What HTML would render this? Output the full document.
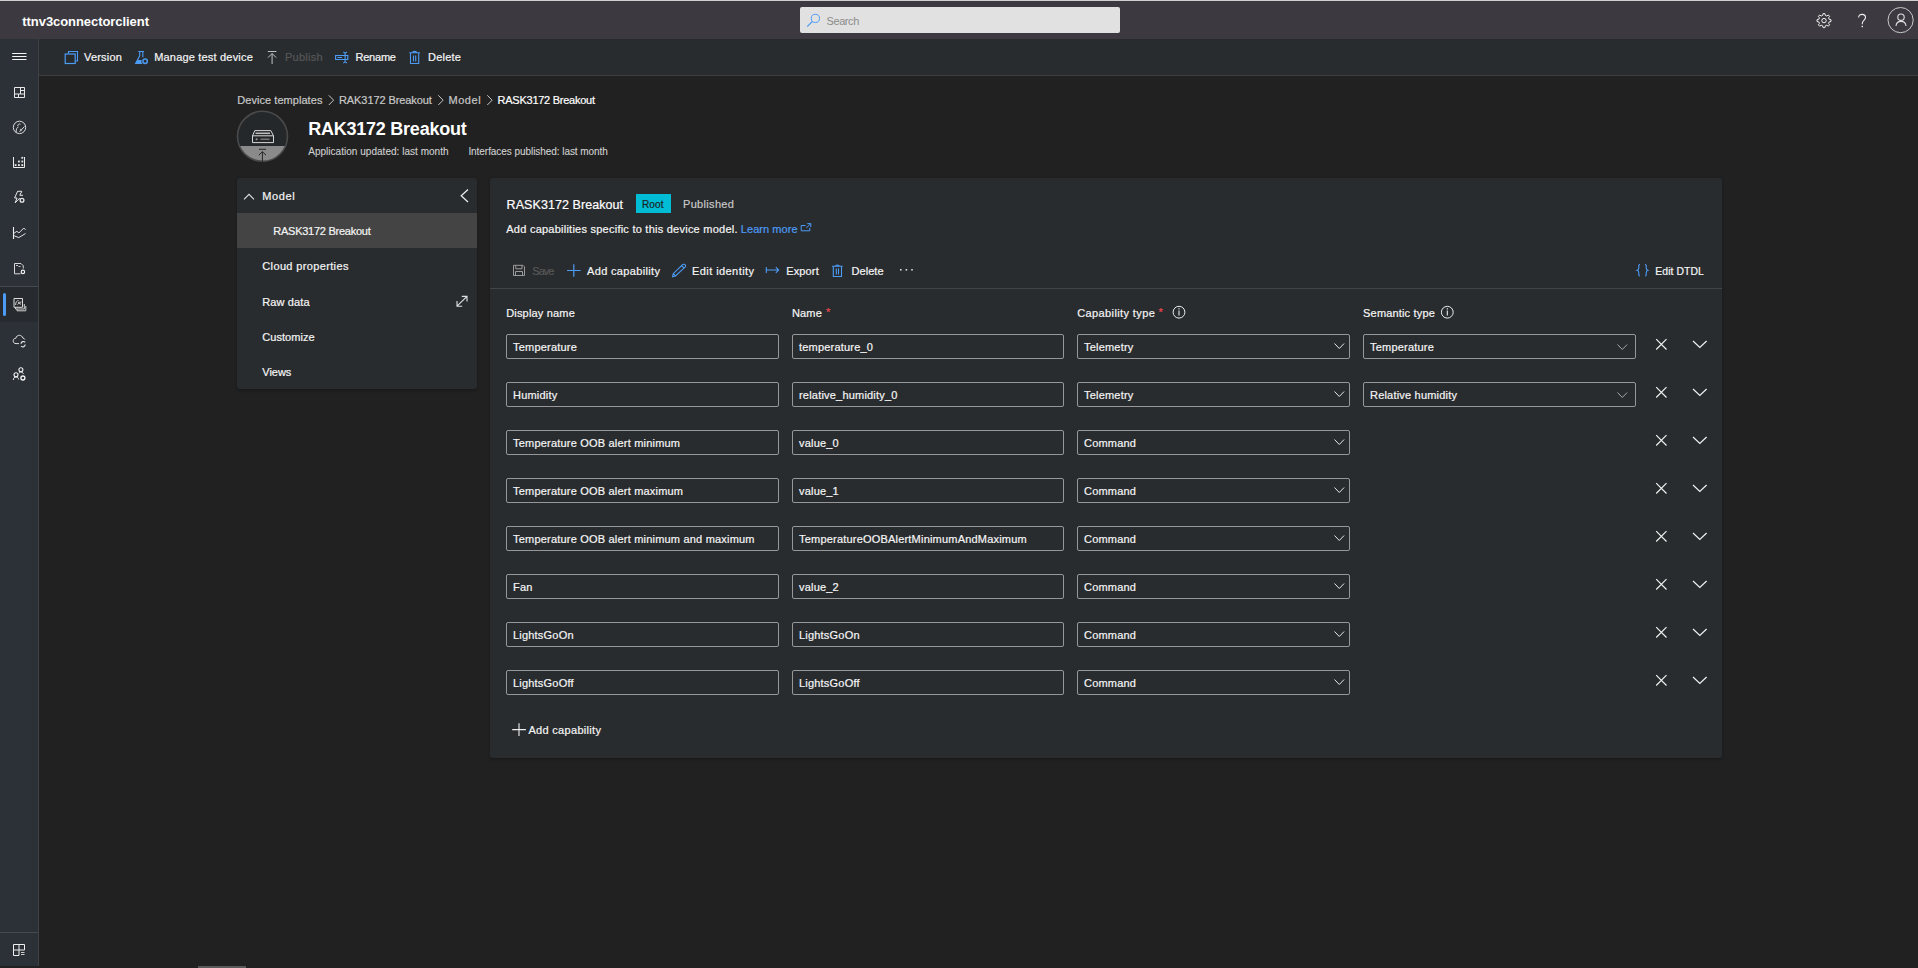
<!DOCTYPE html>
<html><head><meta charset="utf-8">
<style>
*{box-sizing:border-box;margin:0;padding:0}
html,body{width:1918px;height:968px;overflow:hidden}
body{background:#212121;font-family:"Liberation Sans",sans-serif;color:#f5f5f5;font-size:11px;position:relative}
.abs{position:absolute}
.t{position:absolute;white-space:nowrap;line-height:1;-webkit-text-stroke:0.2px currentColor}
.panel{background:#292c2f;border-radius:3px;box-shadow:0 1.6px 3.6px rgba(0,0,0,.13),0 .3px .9px rgba(0,0,0,.11)}
.inp{position:absolute;height:25px;border:1px solid #979797;border-radius:2px;background:#292c2f}
svg{position:absolute;overflow:visible}

</style></head><body>
<div class="abs" style="left:0;top:0;width:1918px;height:1px;background:#cfcfcf"></div>
<div class="abs" style="left:0;top:1px;width:1918px;height:38px;background:#3c3a40"></div>
<div class="abs" style="left:800px;top:7px;width:320px;height:26px;background:#e1e1e1;border-radius:2px"></div>
<div class="abs" style="left:0;top:39px;width:38px;height:927px;background:#2c3138"></div>
<div class="abs" style="left:38px;top:39px;width:1px;height:927px;background:#3e4146"></div>
<div class="abs" style="left:39px;top:39px;width:1879px;height:36px;background:#292c2f"></div>
<div class="abs" style="left:39px;top:75px;width:1879px;height:1px;background:#3d3d3d"></div>
<div class="abs panel" style="left:237px;top:178px;width:240px;height:211px"></div>
<div class="abs" style="left:237px;top:213px;width:240px;height:35px;background:#444444"></div>
<div class="abs panel" style="left:490px;top:178px;width:1232px;height:580px"></div>
<div class="abs" style="left:636px;top:194px;width:35px;height:19px;background:#00bcd4"></div>
<div class="abs" style="left:490px;top:288px;width:1232px;height:1px;background:#424548"></div>
<div class="abs" style="left:0;top:286px;width:38px;height:1px;background:#464a50"></div>
<div class="abs" style="left:0;top:287px;width:38px;height:35px;background:#272a2e"></div>
<div class="abs" style="left:3px;top:293px;width:3px;height:23px;background:#4c9bf5;border-radius:2px"></div>
<div class="abs" style="left:0;top:932px;width:38px;height:1px;background:#464a50"></div>
<div class="abs" style="left:198px;top:966px;width:48px;height:2px;background:#5a5a5a"></div>

<div class="inp" style="left:506px;top:334px;width:273px"></div>
<div class="inp" style="left:792px;top:334px;width:272px"></div>
<div class="inp" style="left:1077px;top:334px;width:273px"></div>
<svg style="left:1333.5px;top:342.6px" width="11" height="7"><path d="M0.5 0.5 L5.3 5.5 L10.1 0.5" fill="none" stroke="#e8e8e8" stroke-width="1"/></svg>
<div class="inp" style="left:1363px;top:334px;width:273px"></div>
<svg style="left:1616.7px;top:343.6px" width="11" height="7"><path d="M0.5 0.5 L5.3 5.5 L10.1 0.5" fill="none" stroke="#a8a8a8" stroke-width="1"/></svg>
<svg style="left:1655px;top:338px" width="13" height="13"><path d="M1.2 1.2 L11.5 11.5 M11.5 1.2 L1.2 11.5" fill="none" stroke="#f0f0f0" stroke-width="1.2"/></svg>
<svg style="left:1692px;top:340px" width="16" height="9"><path d="M1 1 L7.8 7.5 L14.6 1" fill="none" stroke="#f0f0f0" stroke-width="1.2"/></svg>
<div class="inp" style="left:506px;top:382px;width:273px"></div>
<div class="inp" style="left:792px;top:382px;width:272px"></div>
<div class="inp" style="left:1077px;top:382px;width:273px"></div>
<svg style="left:1333.5px;top:390.6px" width="11" height="7"><path d="M0.5 0.5 L5.3 5.5 L10.1 0.5" fill="none" stroke="#e8e8e8" stroke-width="1"/></svg>
<div class="inp" style="left:1363px;top:382px;width:273px"></div>
<svg style="left:1616.7px;top:391.6px" width="11" height="7"><path d="M0.5 0.5 L5.3 5.5 L10.1 0.5" fill="none" stroke="#a8a8a8" stroke-width="1"/></svg>
<svg style="left:1655px;top:386px" width="13" height="13"><path d="M1.2 1.2 L11.5 11.5 M11.5 1.2 L1.2 11.5" fill="none" stroke="#f0f0f0" stroke-width="1.2"/></svg>
<svg style="left:1692px;top:388px" width="16" height="9"><path d="M1 1 L7.8 7.5 L14.6 1" fill="none" stroke="#f0f0f0" stroke-width="1.2"/></svg>
<div class="inp" style="left:506px;top:430px;width:273px"></div>
<div class="inp" style="left:792px;top:430px;width:272px"></div>
<div class="inp" style="left:1077px;top:430px;width:273px"></div>
<svg style="left:1333.5px;top:438.6px" width="11" height="7"><path d="M0.5 0.5 L5.3 5.5 L10.1 0.5" fill="none" stroke="#e8e8e8" stroke-width="1"/></svg>
<svg style="left:1655px;top:434px" width="13" height="13"><path d="M1.2 1.2 L11.5 11.5 M11.5 1.2 L1.2 11.5" fill="none" stroke="#f0f0f0" stroke-width="1.2"/></svg>
<svg style="left:1692px;top:436px" width="16" height="9"><path d="M1 1 L7.8 7.5 L14.6 1" fill="none" stroke="#f0f0f0" stroke-width="1.2"/></svg>
<div class="inp" style="left:506px;top:478px;width:273px"></div>
<div class="inp" style="left:792px;top:478px;width:272px"></div>
<div class="inp" style="left:1077px;top:478px;width:273px"></div>
<svg style="left:1333.5px;top:486.6px" width="11" height="7"><path d="M0.5 0.5 L5.3 5.5 L10.1 0.5" fill="none" stroke="#e8e8e8" stroke-width="1"/></svg>
<svg style="left:1655px;top:482px" width="13" height="13"><path d="M1.2 1.2 L11.5 11.5 M11.5 1.2 L1.2 11.5" fill="none" stroke="#f0f0f0" stroke-width="1.2"/></svg>
<svg style="left:1692px;top:484px" width="16" height="9"><path d="M1 1 L7.8 7.5 L14.6 1" fill="none" stroke="#f0f0f0" stroke-width="1.2"/></svg>
<div class="inp" style="left:506px;top:526px;width:273px"></div>
<div class="inp" style="left:792px;top:526px;width:272px"></div>
<div class="inp" style="left:1077px;top:526px;width:273px"></div>
<svg style="left:1333.5px;top:534.6px" width="11" height="7"><path d="M0.5 0.5 L5.3 5.5 L10.1 0.5" fill="none" stroke="#e8e8e8" stroke-width="1"/></svg>
<svg style="left:1655px;top:530px" width="13" height="13"><path d="M1.2 1.2 L11.5 11.5 M11.5 1.2 L1.2 11.5" fill="none" stroke="#f0f0f0" stroke-width="1.2"/></svg>
<svg style="left:1692px;top:532px" width="16" height="9"><path d="M1 1 L7.8 7.5 L14.6 1" fill="none" stroke="#f0f0f0" stroke-width="1.2"/></svg>
<div class="inp" style="left:506px;top:574px;width:273px"></div>
<div class="inp" style="left:792px;top:574px;width:272px"></div>
<div class="inp" style="left:1077px;top:574px;width:273px"></div>
<svg style="left:1333.5px;top:582.6px" width="11" height="7"><path d="M0.5 0.5 L5.3 5.5 L10.1 0.5" fill="none" stroke="#e8e8e8" stroke-width="1"/></svg>
<svg style="left:1655px;top:578px" width="13" height="13"><path d="M1.2 1.2 L11.5 11.5 M11.5 1.2 L1.2 11.5" fill="none" stroke="#f0f0f0" stroke-width="1.2"/></svg>
<svg style="left:1692px;top:580px" width="16" height="9"><path d="M1 1 L7.8 7.5 L14.6 1" fill="none" stroke="#f0f0f0" stroke-width="1.2"/></svg>
<div class="inp" style="left:506px;top:622px;width:273px"></div>
<div class="inp" style="left:792px;top:622px;width:272px"></div>
<div class="inp" style="left:1077px;top:622px;width:273px"></div>
<svg style="left:1333.5px;top:630.6px" width="11" height="7"><path d="M0.5 0.5 L5.3 5.5 L10.1 0.5" fill="none" stroke="#e8e8e8" stroke-width="1"/></svg>
<svg style="left:1655px;top:626px" width="13" height="13"><path d="M1.2 1.2 L11.5 11.5 M11.5 1.2 L1.2 11.5" fill="none" stroke="#f0f0f0" stroke-width="1.2"/></svg>
<svg style="left:1692px;top:628px" width="16" height="9"><path d="M1 1 L7.8 7.5 L14.6 1" fill="none" stroke="#f0f0f0" stroke-width="1.2"/></svg>
<div class="inp" style="left:506px;top:670px;width:273px"></div>
<div class="inp" style="left:792px;top:670px;width:272px"></div>
<div class="inp" style="left:1077px;top:670px;width:273px"></div>
<svg style="left:1333.5px;top:678.6px" width="11" height="7"><path d="M0.5 0.5 L5.3 5.5 L10.1 0.5" fill="none" stroke="#e8e8e8" stroke-width="1"/></svg>
<svg style="left:1655px;top:674px" width="13" height="13"><path d="M1.2 1.2 L11.5 11.5 M11.5 1.2 L1.2 11.5" fill="none" stroke="#f0f0f0" stroke-width="1.2"/></svg>
<svg style="left:1692px;top:676px" width="16" height="9"><path d="M1 1 L7.8 7.5 L14.6 1" fill="none" stroke="#f0f0f0" stroke-width="1.2"/></svg>
<svg style="left:0;top:0" width="1918" height="968" viewBox="0 0 1918 968">
<g fill="none" stroke-linecap="butt">
<!-- search -->
<circle cx="815.4" cy="18.4" r="4.1" stroke="#4c9bf5" stroke-width="1"/>
<path d="M812.3 21.5 L807.2 26.6" stroke="#4c9bf5" stroke-width="1.1"/>
<!-- gear -->
<path d="M1823.1 13.6 L1824.9 13.6 L1825.3 15.4 L1826.8 16.0 L1828.3 15.0 L1829.6 16.3 L1828.6 17.8 L1829.2 19.3 L1831.0 19.7 L1831.0 21.5 L1829.2 21.9 L1828.6 23.4 L1829.6 24.9 L1828.3 26.2 L1826.8 25.2 L1825.3 25.8 L1824.9 27.6 L1823.1 27.6 L1822.7 25.8 L1821.2 25.2 L1819.7 26.2 L1818.4 24.9 L1819.4 23.4 L1818.8 21.9 L1817.0 21.5 L1817.0 19.7 L1818.8 19.3 L1819.4 17.8 L1818.4 16.3 L1819.7 15.0 L1821.2 16.0 L1822.7 15.4 Z" stroke="#f0f0f0" stroke-width="1"/>
<circle cx="1824" cy="20.6" r="2.2" stroke="#f0f0f0" stroke-width="1"/>
<!-- question -->
<path d="M1858.6 17.6 C1858.6 15.3 1860.1 14.4 1862 14.4 C1864 14.4 1865.5 15.6 1865.5 17.5 C1865.5 20 1862.3 20.6 1862.3 23.2 L1862.3 24.3" stroke="#f0f0f0" stroke-width="1.1"/>
<rect x="1861.6" y="25.8" width="1.4" height="1.4" fill="#f0f0f0" stroke="none"/>
<!-- avatar -->
<circle cx="1900.6" cy="20.1" r="12.6" stroke="#c8c8c8" stroke-width="1"/>
<circle cx="1901" cy="17.2" r="3.2" stroke="#e0e0e0" stroke-width="1.1"/>
<path d="M1896 26 C1896.3 23 1898.2 21.4 1901 21.4 C1903.8 21.4 1905.7 23 1906 26" stroke="#e0e0e0" stroke-width="1.1"/>

<!-- nav: hamburger -->
<path d="M12.2 53.5 H26.5 M12.2 56.5 H26.5 M12.2 59.5 H26.5" stroke="#f5f5f5" stroke-width="1"/>
<!-- dashboard -->
<path d="M14.5 87.5 H24.5 V97.5 H14.5 Z M20.5 87.5 V94 M20.5 90.5 H24.5 M14.5 94 H24.5 M18.5 94 V97.5" stroke="#e8e8e8" stroke-width="1"/>
<!-- circle person -->
<circle cx="19.5" cy="127.4" r="6.2" stroke="#dcdcdc" stroke-width="1"/>
<path d="M16.2 132.5 C16 129 16.8 127.5 18.5 127 M17.8 126.2 C17.5 124.5 19 123.5 20.5 124.2 M19.5 131.8 L24.5 126.5" stroke="#dcdcdc" stroke-width="1"/>
<circle cx="21" cy="129.8" r="1.1" fill="#bbb" stroke="none"/>
<!-- bar chart -->
<path d="M13.5 157 V167.5 H24.5 V157" stroke="#ececec" stroke-width="1"/>
<g fill="#ececec" stroke="none"><rect x="14.7" y="164.2" width="1.8" height="1.8"/><rect x="18" y="164.2" width="1.8" height="1.8"/><rect x="21.4" y="164.2" width="1.8" height="1.8"/><rect x="18" y="160.6" width="1.8" height="1.8"/><rect x="21.4" y="160.6" width="1.8" height="1.8"/><rect x="21.4" y="156.9" width="1.8" height="1.8"/></g>
<!-- flash -->
<path d="M17.6 191.3 H21.8 L19.8 195.3 H23 M17.6 191.3 L14.6 198 H17 L15.2 202.8 L19.8 198" stroke="#e8e8e8" stroke-width="1"/>
<circle cx="22" cy="200.2" r="1.9" stroke="#e8e8e8" stroke-width="1.3"/>
<!-- chart -->
<path d="M13.5 227 V239" stroke="#f0f0f0" stroke-width="1.1"/>
<path d="M13.5 233.5 L16.9 231.3 L18.9 233 L23.8 228 L25.5 229.8 M13.5 235.5 L18.8 237.6 L25.5 233.5" stroke="#e0e0e0" stroke-width="1"/>
<!-- file -->
<path d="M14.5 273.8 V263.5 H21 L23.3 265.8 V268.5 M14.5 273.8 H20.5" stroke="#d8d8d8" stroke-width="1"/>
<path d="M16 265.5 H18 M18.5 266.5 H20.5" stroke="#c8c8c8" stroke-width="1"/>
<circle cx="22.9" cy="271.9" r="1.7" stroke="#f0f0f0" stroke-width="1.2"/>
<!-- selected (device templates) -->
<path d="M14 298.5 H22.5 V307.3 H14 Z" stroke="#dcdcdc" stroke-width="1"/>
<path d="M15.5 307.3 V309 H24.3 V304 M17 309 V310.8 H25.8 V306" stroke="#d0d0d0" stroke-width="1"/>
<path d="M15.6 305 C15.6 302 17 300.5 18.5 300.5 M18 302.5 L21.5 302 M17.5 304.5 C18 303.2 20 303 21 304.5" stroke="#cccccc" stroke-width="1"/>
<!-- cloud -->
<path d="M19 343.6 H16 C14 343.6 13.2 342.2 13.2 340.8 C13.2 339.3 14.3 338.2 15.8 338.3 C16.3 336.2 17.8 335.3 19.4 335.3 C21.2 335.3 22.4 336.5 22.8 338 C23.8 338.1 24.6 338.8 24.8 339.5" stroke="#e0e0e0" stroke-width="1"/>
<path d="M21 343.8 A2.4 2.4 0 0 1 25.2 342.3 M25.2 344.5 A2.4 2.4 0 0 1 21 346" stroke="#e8e8e8" stroke-width="1.1"/>
<!-- people -->
<circle cx="20.9" cy="369.8" r="2" stroke="#f0f0f0" stroke-width="1.1"/>
<circle cx="16" cy="374.8" r="2" stroke="#f0f0f0" stroke-width="1.1"/>
<path d="M13.3 380 C13.5 377.8 14.6 377 16 377 C17.4 377 18.5 377.8 18.7 379.5 M19 373.3 C19.5 372.2 20.2 372 20.9 372 C22 372 23 372.7 23.4 374" stroke="#eaeaea" stroke-width="1"/>
<circle cx="22.9" cy="378" r="2" stroke="#f5f5f5" stroke-width="1.3"/>
<!-- bottom nav icon -->
<path d="M13.5 944.5 H19.5 M13.5 944.5 V955.5 H19 M13.5 950 H24.5 M19 944.5 V955.5 M19 944.5 H24.5 V950" stroke="#eeeeee" stroke-width="1"/>
<path d="M21 952.5 H24.5 M21 954.5 H24.5" stroke="#cccccc" stroke-width="1"/>

<!-- command bar -->
<path d="M68.5 53.5 V51.5 H77.5 V61 H75.5" stroke="#4c9bf5" stroke-width="1.1"/>
<rect x="65.2" y="54" width="10" height="9.5" stroke="#4c9bf5" stroke-width="1.2"/>
<path d="M138.2 51.5 H144 M139.7 51.5 V55.8 L135.6 63.5 H142 M142.8 51.5 V57.2" stroke="#4c9bf5" stroke-width="1.1"/>
<path d="M137.4 60 H141.5 V63.6 H135.6 Z" fill="#4c9bf5" stroke="none"/>
<circle cx="145.1" cy="61.2" r="2.2" stroke="#4c9bf5" stroke-width="1.5"/>
<path d="M267.8 51.5 H276.4 M272.1 53.5 V64 M268 57.6 L272.1 53.5 L276.2 57.6" stroke="#c0c0c0" stroke-width="1"/>
<path d="M335.6 55.5 H347.8 V59.5 H335.6 Z M337.5 57.5 H342" stroke="#4c9bf5" stroke-width="1.1"/>
<path d="M345.1 52.5 V62.5 M343.3 52 L345.1 53.2 L346.9 52 M343.3 63 L345.1 61.8 L346.9 63" stroke="#4c9bf5" stroke-width="1.1"/>
<path d="M409.3 52.8 H420 M412.6 52.5 C412.6 51 416.6 51 416.6 52.5 M410.5 53 V63.5 H418.7 V53 M413.5 55.5 V61.5 M415.7 55.5 V61.5" stroke="#4c9bf5" stroke-width="1.1"/>

<!-- breadcrumb chevrons -->
<path d="M328.8 95.3 L333.6 100.2 L328.8 105" stroke="#c8c8c8" stroke-width="1"/>
<path d="M438.3 95.3 L443.1 100.2 L438.3 105" stroke="#c8c8c8" stroke-width="1"/>
<path d="M487.3 95.3 L492.1 100.2 L487.3 105" stroke="#c8c8c8" stroke-width="1"/>

<!-- left panel -->
<path d="M244 199.3 L249 194.3 L254 199.3" stroke="#e0e0e0" stroke-width="1.1"/>
<path d="M468 189.5 L461.2 195.8 L468 202" stroke="#f0f0f0" stroke-width="1.2"/>
<path d="M457 306.2 L467 296.4 M461.8 296.4 H467 V301.6 M457 301 V306.2 H462.2" stroke="#e0e0e0" stroke-width="1.1"/>

<!-- panel toolbar -->
<path d="M513.5 265.3 H523 L524.5 266.8 V275.5 H513.5 Z M515.8 265.3 V268.8 H522 V265.3 M515.5 275.5 V271.5 H522.5 V275.5" stroke="#9a9a9a" stroke-width="1"/>
<path d="M567 270.5 H580.6 M573.8 264.3 V276.8" stroke="#4c9bf5" stroke-width="1.2"/>
<path d="M682.8 264.5 C683.8 263.8 685 264.4 685.4 265.1 C685.8 265.8 685.6 266.7 685 267.2 L675.5 276 L672.5 276.7 L673.2 273.7 Z M681.6 265.7 L684.2 268.2 M673.3 273.6 L675.6 275.9" stroke="#4c9bf5" stroke-width="1.1"/>
<path d="M766.3 267 V273 M766.3 270 H778.5 M775.8 267.2 L778.7 270 L775.8 272.8" stroke="#4c9bf5" stroke-width="1.1"/>
<path d="M832.1 266.3 H842.7 M835.5 266 C835.5 264.6 839.3 264.6 839.3 266 M833.3 266.5 V276.5 H841.5 V266.5 M836.3 268.5 V274.5 M838.5 268.5 V274.5" stroke="#4c9bf5" stroke-width="1.1"/>
<g fill="#d8d8d8" stroke="none"><rect x="900" y="269" width="1.6" height="1.6"/><rect x="905.6" y="269" width="1.6" height="1.6"/><rect x="911.2" y="269" width="1.6" height="1.6"/></g>
<path d="M1640 264.5 C1638.5 264.5 1638.8 266 1638.8 267.8 C1638.8 269.2 1638.3 270 1637.2 270.3 C1638.3 270.6 1638.8 271.4 1638.8 272.8 C1638.8 274.6 1638.5 276 1640 276 M1645 264.5 C1646.5 264.5 1646.2 266 1646.2 267.8 C1646.2 269.2 1646.7 270 1647.8 270.3 C1646.7 270.6 1646.2 271.4 1646.2 272.8 C1646.2 274.6 1646.5 276 1645 276" stroke="#4c9bf5" stroke-width="1.1"/>

<!-- learn more ext -->
<path d="M805.5 225.5 H801.2 V230.8 H809.8 V227.8 M807.3 223.6 H810.8 V227 M810.8 223.6 L806.3 227.8" stroke="#4c9bf5" stroke-width="1"/>

<!-- info icons -->
<circle cx="1179" cy="312.2" r="5.9" stroke="#ececec" stroke-width="1"/>
<path d="M1179 310.5 V315.5" stroke="#ececec" stroke-width="1.1"/>
<rect x="1178.4" y="308.2" width="1.2" height="1.2" fill="#ececec" stroke="none"/>
<circle cx="1447.3" cy="312.2" r="5.9" stroke="#ececec" stroke-width="1"/>
<path d="M1447.3 310.5 V315.5" stroke="#ececec" stroke-width="1.1"/>
<rect x="1446.7" y="308.2" width="1.2" height="1.2" fill="#ececec" stroke="none"/>

<!-- add capability plus -->
<path d="M512.2 729.6 H525.9 M519 723.2 V736" stroke="#f0f0f0" stroke-width="1.1"/>
</g>
</svg>
<!-- avatar -->
<svg style="left:236px;top:110px" width="53" height="53"><defs><clipPath id="cc"><circle cx="26.5" cy="26.3" r="25"/></clipPath></defs><circle cx="26.5" cy="26.3" r="25" fill="#25282b"/><rect x="0" y="36" width="53" height="20" fill="#8a8a8a" clip-path="url(#cc)"/><circle cx="26.5" cy="26.3" r="25" fill="none" stroke="#4a4a4a" stroke-width="1.6"/><path d="M16.5 25.8 L18.8 20.6 H34.8 L37.5 25.8 V32.6 H16.5 Z M16.5 25.8 H37.5" fill="none" stroke="#d8d8d8" stroke-width="1"/><path d="M19.5 23.3 H34" stroke="#c0c0c0" stroke-width="1.5"/><circle cx="20.6" cy="29.2" r="1" fill="#9a9a9a"/><path d="M24.5 29.2 H33.5" stroke="#8a8a8a" stroke-width="1.2"/><path d="M23 39.3 H30 M26.4 41.8 V52 M22.8 45.2 L26.4 41.7 L30 45.2" fill="none" stroke="#262626" stroke-width="1"/></svg>

<div class="t" id="t0" style="left:22.3px;top:14.60px;font-size:13px;color:#ffffff;font-weight:bold;letter-spacing:-0.061px;-webkit-text-stroke:0">ttnv3connectorclient</div>
<div class="t" id="t1" style="left:826.6px;top:15.86px;font-size:11px;color:#8c8c8c;font-weight:normal;letter-spacing:-0.432px;-webkit-text-stroke:0">Search</div>
<div class="t" id="t2" style="left:84.0px;top:51.66px;font-size:11px;color:#f5f5f5;font-weight:normal;letter-spacing:0.199px;">Version</div>
<div class="t" id="t3" style="left:154.2px;top:51.66px;font-size:11px;color:#f5f5f5;font-weight:normal;letter-spacing:0.189px;">Manage test device</div>
<div class="t" id="t4" style="left:285.0px;top:51.66px;font-size:11px;color:#575757;font-weight:normal;letter-spacing:0.254px;">Publish</div>
<div class="t" id="t5" style="left:355.4px;top:51.66px;font-size:11px;color:#f5f5f5;font-weight:normal;letter-spacing:-0.196px;">Rename</div>
<div class="t" id="t6" style="left:428.0px;top:51.66px;font-size:11px;color:#f5f5f5;font-weight:normal;letter-spacing:0.221px;">Delete</div>
<div class="t" id="t7" style="left:237.3px;top:94.56px;font-size:11px;color:#c8c8c8;font-weight:normal;letter-spacing:0.048px;">Device templates</div>
<div class="t" id="t8" style="left:339.0px;top:94.56px;font-size:11px;color:#c8c8c8;font-weight:normal;letter-spacing:-0.085px;">RAK3172 Breakout</div>
<div class="t" id="t9" style="left:448.4px;top:94.56px;font-size:11px;color:#c8c8c8;font-weight:normal;letter-spacing:0.583px;">Model</div>
<div class="t" id="t10" style="left:497.6px;top:94.56px;font-size:11px;color:#ffffff;font-weight:normal;letter-spacing:-0.257px;">RASK3172 Breakout</div>
<div class="t" id="t11" style="left:308.2px;top:119.75px;font-size:18px;color:#ffffff;font-weight:bold;letter-spacing:-0.237px;-webkit-text-stroke:0">RAK3172 Breakout</div>
<div class="t" id="t12" style="left:308.2px;top:146.59px;font-size:10px;color:#d0d0d0;font-weight:normal;letter-spacing:0.028px;-webkit-text-stroke:0.1px currentColor">Application updated: last month</div>
<div class="t" id="t13" style="left:468.4px;top:146.59px;font-size:10px;color:#d0d0d0;font-weight:normal;letter-spacing:-0.055px;-webkit-text-stroke:0.1px currentColor">Interfaces published: last month</div>
<div class="t" id="t14" style="left:262.3px;top:191.06px;font-size:11px;color:#f5f5f5;font-weight:normal;letter-spacing:0.608px;">Model</div>
<div class="t" id="t15" style="left:273.3px;top:225.56px;font-size:11px;color:#f5f5f5;font-weight:normal;letter-spacing:-0.257px;">RASK3172 Breakout</div>
<div class="t" id="t16" style="left:262.3px;top:261.26px;font-size:11px;color:#f5f5f5;font-weight:normal;letter-spacing:0.359px;">Cloud properties</div>
<div class="t" id="t17" style="left:262.3px;top:297.36px;font-size:11px;color:#f5f5f5;font-weight:normal;letter-spacing:0.117px;">Raw data</div>
<div class="t" id="t18" style="left:262.3px;top:332.16px;font-size:11px;color:#f5f5f5;font-weight:normal;letter-spacing:0.041px;">Customize</div>
<div class="t" id="t19" style="left:262.3px;top:367.16px;font-size:11px;color:#f5f5f5;font-weight:normal;letter-spacing:-0.039px;">Views</div>
<div class="t" id="t20" style="left:506.6px;top:198.57px;font-size:12.5px;color:#ffffff;font-weight:normal;letter-spacing:0.065px;">RASK3172 Breakout</div>
<div class="t" id="t21" style="left:642.0px;top:199.89px;font-size:10px;color:#1e1e1e;font-weight:normal;letter-spacing:0.125px;">Root</div>
<div class="t" id="t22" style="left:683.0px;top:198.76px;font-size:11px;color:#c8c8c8;font-weight:normal;letter-spacing:0.321px;">Published</div>
<div class="t" id="t23" style="left:506.3px;top:224.36px;font-size:11px;color:#f5f5f5;font-weight:normal;letter-spacing:0.241px;">Add capabilities specific to this device model.</div>
<div class="t" id="t24" style="left:740.8px;top:224.36px;font-size:11px;color:#4c9bf5;font-weight:normal;letter-spacing:0.059px;">Learn more</div>
<div class="t" id="t25" style="left:532.3px;top:266.36px;font-size:11px;color:#575757;font-weight:normal;letter-spacing:-0.959px;">Save</div>
<div class="t" id="t26" style="left:587.0px;top:266.36px;font-size:11px;color:#f5f5f5;font-weight:normal;letter-spacing:0.346px;">Add capability</div>
<div class="t" id="t27" style="left:692.0px;top:266.36px;font-size:11px;color:#f5f5f5;font-weight:normal;letter-spacing:0.427px;">Edit identity</div>
<div class="t" id="t28" style="left:786.2px;top:266.36px;font-size:11px;color:#f5f5f5;font-weight:normal;letter-spacing:0.141px;">Export</div>
<div class="t" id="t29" style="left:851.5px;top:266.36px;font-size:11px;color:#f5f5f5;font-weight:normal;letter-spacing:0.061px;">Delete</div>
<div class="t" id="t30" style="left:1655.3px;top:266.74px;font-size:10.4px;color:#f5f5f5;font-weight:normal;letter-spacing:0.070px;">Edit DTDL</div>
<div class="t" id="t31" style="left:506.2px;top:307.76px;font-size:11px;color:#f5f5f5;font-weight:normal;letter-spacing:0.178px;">Display name</div>
<div class="t" id="t32" style="left:792.0px;top:307.76px;font-size:11px;color:#f5f5f5;font-weight:normal;letter-spacing:0.152px;">Name</div>
<div class="t" id="t33" style="left:1077.2px;top:307.76px;font-size:11px;color:#f5f5f5;font-weight:normal;letter-spacing:0.389px;">Capability type</div>
<div class="t" id="t34" style="left:1363.1px;top:307.76px;font-size:11px;color:#f5f5f5;font-weight:normal;letter-spacing:0.166px;">Semantic type</div>
<div class="t" id="t35" style="left:826.0px;top:306.76px;font-size:11px;color:#e8474f;font-weight:normal;letter-spacing:0.000px;">*</div>
<div class="t" id="t36" style="left:1158.5px;top:306.76px;font-size:11px;color:#e8474f;font-weight:normal;letter-spacing:0.000px;">*</div>
<div class="t" id="t37" style="left:528.4px;top:724.56px;font-size:11px;color:#f5f5f5;font-weight:normal;letter-spacing:0.315px;">Add capability</div>
<div class="t" id="t38" style="left:513.0px;top:341.96px;font-size:11px;color:#f5f5f5;font-weight:normal;letter-spacing:0.200px;">Temperature</div>
<div class="t" id="t39" style="left:799.0px;top:341.96px;font-size:11px;color:#f5f5f5;font-weight:normal;letter-spacing:0.200px;">temperature_0</div>
<div class="t" id="t40" style="left:1084.0px;top:341.96px;font-size:11px;color:#f5f5f5;font-weight:normal;letter-spacing:0.200px;">Telemetry</div>
<div class="t" id="t41" style="left:1370.0px;top:341.96px;font-size:11px;color:#f5f5f5;font-weight:normal;letter-spacing:0.200px;">Temperature</div>
<div class="t" id="t42" style="left:513.0px;top:389.96px;font-size:11px;color:#f5f5f5;font-weight:normal;letter-spacing:0.200px;">Humidity</div>
<div class="t" id="t43" style="left:799.0px;top:389.96px;font-size:11px;color:#f5f5f5;font-weight:normal;letter-spacing:0.200px;">relative_humidity_0</div>
<div class="t" id="t44" style="left:1084.0px;top:389.96px;font-size:11px;color:#f5f5f5;font-weight:normal;letter-spacing:0.200px;">Telemetry</div>
<div class="t" id="t45" style="left:1370.0px;top:389.96px;font-size:11px;color:#f5f5f5;font-weight:normal;letter-spacing:0.200px;">Relative humidity</div>
<div class="t" id="t46" style="left:513.0px;top:437.96px;font-size:11px;color:#f5f5f5;font-weight:normal;letter-spacing:0.200px;">Temperature OOB alert minimum</div>
<div class="t" id="t47" style="left:799.0px;top:437.96px;font-size:11px;color:#f5f5f5;font-weight:normal;letter-spacing:0.200px;">value_0</div>
<div class="t" id="t48" style="left:1084.0px;top:437.96px;font-size:11px;color:#f5f5f5;font-weight:normal;letter-spacing:0.200px;">Command</div>
<div class="t" id="t49" style="left:513.0px;top:485.96px;font-size:11px;color:#f5f5f5;font-weight:normal;letter-spacing:0.200px;">Temperature OOB alert maximum</div>
<div class="t" id="t50" style="left:799.0px;top:485.96px;font-size:11px;color:#f5f5f5;font-weight:normal;letter-spacing:0.200px;">value_1</div>
<div class="t" id="t51" style="left:1084.0px;top:485.96px;font-size:11px;color:#f5f5f5;font-weight:normal;letter-spacing:0.200px;">Command</div>
<div class="t" id="t52" style="left:513.0px;top:533.96px;font-size:11px;color:#f5f5f5;font-weight:normal;letter-spacing:0.200px;">Temperature OOB alert minimum and maximum</div>
<div class="t" id="t53" style="left:799.0px;top:533.96px;font-size:11px;color:#f5f5f5;font-weight:normal;letter-spacing:0.200px;">TemperatureOOBAlertMinimumAndMaximum</div>
<div class="t" id="t54" style="left:1084.0px;top:533.96px;font-size:11px;color:#f5f5f5;font-weight:normal;letter-spacing:0.200px;">Command</div>
<div class="t" id="t55" style="left:513.0px;top:581.96px;font-size:11px;color:#f5f5f5;font-weight:normal;letter-spacing:0.200px;">Fan</div>
<div class="t" id="t56" style="left:799.0px;top:581.96px;font-size:11px;color:#f5f5f5;font-weight:normal;letter-spacing:0.200px;">value_2</div>
<div class="t" id="t57" style="left:1084.0px;top:581.96px;font-size:11px;color:#f5f5f5;font-weight:normal;letter-spacing:0.200px;">Command</div>
<div class="t" id="t58" style="left:513.0px;top:629.96px;font-size:11px;color:#f5f5f5;font-weight:normal;letter-spacing:0.200px;">LightsGoOn</div>
<div class="t" id="t59" style="left:799.0px;top:629.96px;font-size:11px;color:#f5f5f5;font-weight:normal;letter-spacing:0.200px;">LightsGoOn</div>
<div class="t" id="t60" style="left:1084.0px;top:629.96px;font-size:11px;color:#f5f5f5;font-weight:normal;letter-spacing:0.200px;">Command</div>
<div class="t" id="t61" style="left:513.0px;top:677.96px;font-size:11px;color:#f5f5f5;font-weight:normal;letter-spacing:0.200px;">LightsGoOff</div>
<div class="t" id="t62" style="left:799.0px;top:677.96px;font-size:11px;color:#f5f5f5;font-weight:normal;letter-spacing:0.200px;">LightsGoOff</div>
<div class="t" id="t63" style="left:1084.0px;top:677.96px;font-size:11px;color:#f5f5f5;font-weight:normal;letter-spacing:0.200px;">Command</div>
</body></html>
